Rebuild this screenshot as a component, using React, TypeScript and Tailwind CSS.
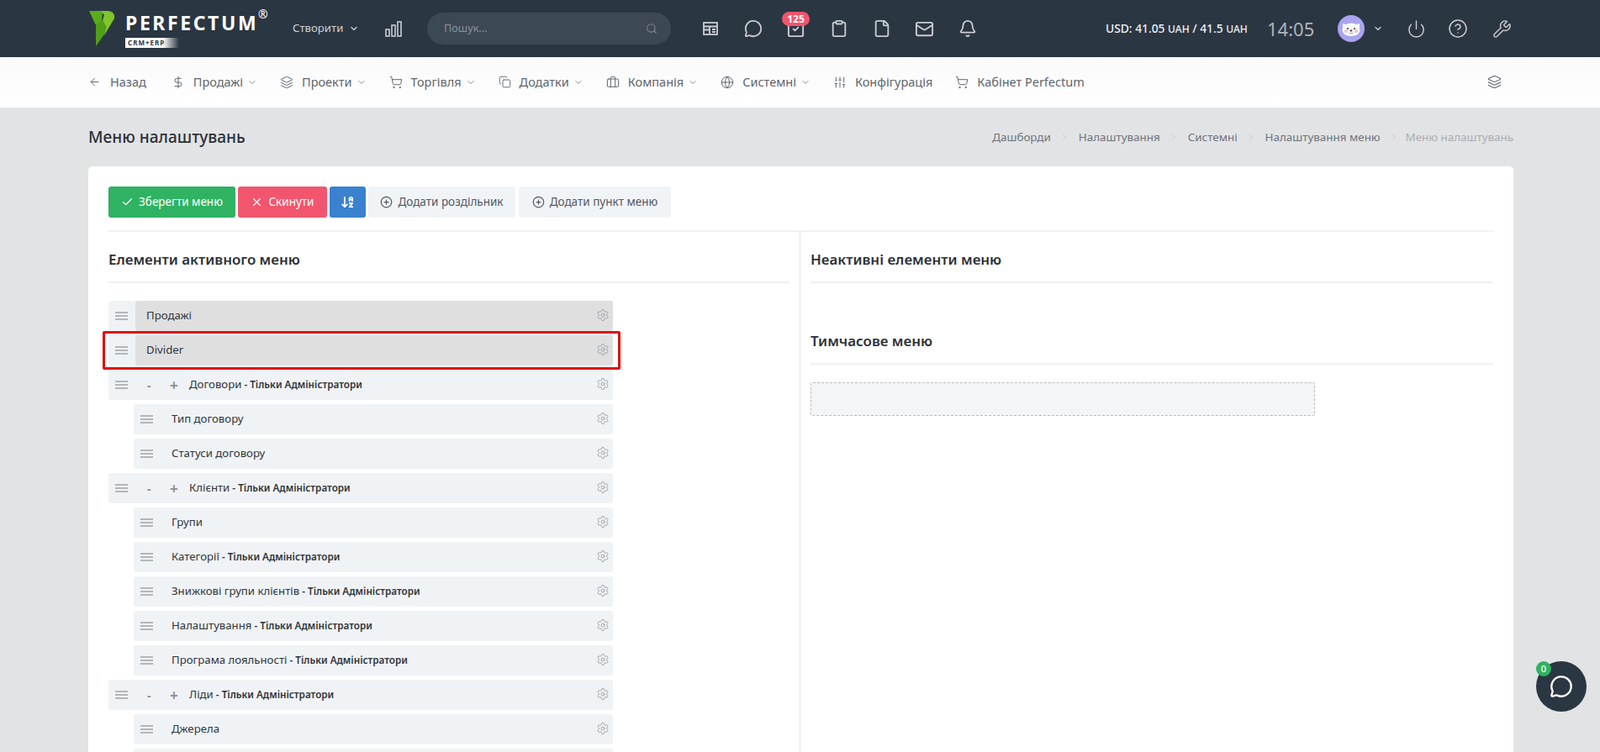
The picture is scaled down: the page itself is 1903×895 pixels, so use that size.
import {
  ArrowDownAZ,
  ArrowLeft,
  Bell,
  Briefcase,
  Check,
  ChevronDown,
  ChevronRight,
  CircleHelp,
  CirclePlus,
  Clipboard,
  Copy,
  DollarSign,
  File,
  Globe,
  Layers,
  Mail,
  MessageCircle,
  Power,
  Search,
  Settings,
  ShoppingCart,
  SlidersVertical,
  SquareCheck,
  Wrench,
  X,
} from "lucide-react";
import type { ReactNode } from "react";

function Logo() {
  return (
    <div className="flex h-[68px] w-[216px] shrink-0 items-center">
      <svg viewBox="0 0 32 44" className="h-[44px] w-[32px] shrink-0">
        <path d="M1 1h16l-1 14-6 2-1.500 0z" fill="#58ad1b" />
        <path d="M9 17l9-5 3 6-2 11-10 14z" fill="#4f9f18" />
        <path d="M15 1h8c6 0 9 4 8 9l-12 20 2-11-4-7 2-6z" fill="#7fc52b" />
      </svg>
      <div className="relative ml-[12px] h-[44px] flex-1">
        <div className="text-[23px] leading-[30px] font-bold tracking-[2.6px] text-white [font-family:'Open_Sans',sans-serif]">
          PERFECTUM
        </div>
        <div className="mt-[3px] flex h-[12px] w-[64px] items-center bg-gradient-to-r from-white from-70% to-transparent pl-[3px] text-[8px] leading-none font-bold tracking-[1px] text-[#2b3643]">
          CRM+ERP
        </div>
        <span className="absolute top-[-6px] left-[158px] text-[14px] text-white">®</span>
      </div>
    </div>
  );
}

function TableIcon() {
  return (
    <svg viewBox="0 0 18 16" width="18" height="16" fill="none" stroke="#c9cdd2" strokeWidth="1.800">
      <rect x="1" y="1" width="16" height="14" />
      <path d="M1 5.500h16M1 9.500h7M8 5.500V15M11 9h4M11 12h4" />
    </svg>
  );
}

function BarsIcon() {
  return (
    <svg viewBox="0 0 20 19" width="20" height="19" fill="none" stroke="#c9cdd2" strokeWidth="1.600">
      <rect x="1" y="10" width="4" height="8" />
      <rect x="8" y="5" width="4" height="13" />
      <rect x="15" y="1" width="4" height="17" />
    </svg>
  );
}

function Avatar() {
  return (
    <svg viewBox="0 0 32 32" className="ml-[28px] h-[32px] w-[32px]">
      <circle cx="16" cy="16" r="16" fill="#a9a4f0" />
      <path d="M6 10l4 1c4-2 8-2 12 0l4-1 0 5c2 6-3 10-10 10S4 21 6 15z" fill="#fbfaf7" />
      <circle cx="10" cy="19" r="2.200" fill="#f6c6cc" />
      <circle cx="22" cy="19" r="2.200" fill="#f6c6cc" />
      <circle cx="12" cy="16" r="1" fill="#333" />
      <circle cx="20" cy="16" r="1" fill="#333" />
      <ellipse cx="16" cy="18.500" rx="1.500" ry="1" fill="#333" />
      <path d="M13.500 21c1 1 2 1 2.500 0 .5 1 1.500 1 2.500 0" fill="none" stroke="#555" strokeWidth="0.600" />
    </svg>
  );
}

function TopIcon({ children, badge }: { children: ReactNode; badge?: string }) {
  return (
    <div className="relative flex h-[68px] w-[51px] items-center justify-center">
      {children}
      {badge && (
        <span className="absolute top-[14px] left-[9px] flex h-[17px] w-[33px] items-center justify-center rounded-full bg-[#f2546c] text-[12px] font-bold text-white">
          {badge}
        </span>
      )}
    </div>
  );
}

function Header() {
  const ic = "#c9cdd2";
  return (
    <header className="flex h-[68px] items-center bg-[#2b3643] pl-[105px]">
      <Logo />
      <div className="ml-[27px] flex w-[100px] items-center gap-[7px] text-[13.200px] text-[#ced2d6]">
        Створити <ChevronDown size={12} strokeWidth={2.500} />
      </div>
      <div className="ml-[10px]">
        <BarsIcon />
      </div>
      <div className="ml-[30px] flex h-[38px] w-[290px] items-center justify-between rounded-full bg-[#3d4855] pr-[16px] pl-[20px] text-[12.700px] text-[#8a929b]">
        Пошук...
        <Search size={14} color="#7d858e" />
      </div>
      <div className="ml-[21px] flex">
        <TopIcon><TableIcon /></TopIcon>
        <TopIcon><MessageCircle size={22} color={ic} strokeWidth={2} /></TopIcon>
        <TopIcon badge="125"><SquareCheck size={23} color={ic} strokeWidth={2} /></TopIcon>
        <TopIcon><Clipboard size={22} color={ic} strokeWidth={2} /></TopIcon>
        <TopIcon><File size={22} color={ic} strokeWidth={2} /></TopIcon>
        <TopIcon><Mail size={23} color={ic} strokeWidth={2} /></TopIcon>
        <TopIcon><Bell size={22} color={ic} strokeWidth={2} /></TopIcon>
      </div>
      <div className="ml-[139px] w-[168px] text-[13.800px] font-medium whitespace-nowrap text-[#eef0f2]">
        USD: 41.05 <span className="text-[12px]">UAH</span> / 41.5 <span className="text-[12px]">UAH</span>
      </div>
      <div className="ml-[24px] w-[56px] text-[22px] text-[#aeb4ba]">14:05</div>
      <Avatar />
      <ChevronDown size={12} color={ic} strokeWidth={2.500} className="ml-[10px]" />
      <Power size={23} color={ic} strokeWidth={1.500} className="ml-[28px]" />
      <CircleHelp size={24} color={ic} strokeWidth={1.500} className="ml-[26px]" />
      <Wrench size={23} color={ic} strokeWidth={1.500} className="ml-[29px]" />
    </header>
  );
}

const nav: { icon: ReactNode; label: string; chev: boolean }[] = [
  { icon: <DollarSign size={16} strokeWidth={1.500} />, label: "Продажі", chev: true },
  { icon: <Layers size={16} strokeWidth={1.500} />, label: "Проекти", chev: true },
  { icon: <ShoppingCart size={16} strokeWidth={1.500} />, label: "Торгівля", chev: true },
  { icon: <Copy size={15} strokeWidth={1.500} />, label: "Додатки", chev: true },
  { icon: <Briefcase size={16} strokeWidth={1.500} />, label: "Компанія", chev: true },
  { icon: <Globe size={16} strokeWidth={1.500} />, label: "Системні", chev: true },
  { icon: <SlidersVertical size={16} strokeWidth={1.500} />, label: "Конфігурація", chev: false },
  { icon: <ShoppingCart size={16} strokeWidth={1.500} />, label: "Кабінет Perfectum", chev: false },
];

function Nav() {
  return (
    <nav className="flex h-[60px] items-center justify-between bg-gradient-to-b from-[#fafafa] to-white pr-[117px] pb-[1px] pl-[105px] text-[14.500px] text-[#5f666d]">
      <div className="flex items-center gap-[27px]">
        <div className="mr-[3px] flex items-center gap-[11px]">
          <ArrowLeft size={15} strokeWidth={1.500} />
          Назад
        </div>
        {nav.map((n) => (
          <div key={n.label} className="flex items-center">
            {n.icon}
            <span className="ml-[10px]">{n.label}</span>
            {n.chev && <ChevronDown size={12} strokeWidth={1.500} className="ml-[5px]" />}
          </div>
        ))}
      </div>
      <Layers size={17} strokeWidth={1.500} />
    </nav>
  );
}

const crumbs = ["Дашборди", "Налаштування", "Системні", "Налаштування меню"];

function TitleBar() {
  return (
    <div className="flex h-[70px] items-center justify-between">
      <h1 className="text-[19.100px] font-medium text-[#2d3136]">Меню налаштувань</h1>
      <div className="flex items-center text-[13.400px] text-[#6e757c]">
        {crumbs.map((c) => (
          <span key={c} className="flex items-center">
            {c}
            <ChevronRight size={12} color="#c6c9cc" className="mx-[10.500px]" />
          </span>
        ))}
        <span className="-ml-[3px] text-[#a9aeb3]">Меню налаштувань</span>
      </div>
    </div>
  );
}

function Btn({ className, children }: { className: string; children: ReactNode }) {
  return (
    <div className={`flex h-[37px] items-center justify-center gap-[6px] rounded-[3px] text-[13.500px] ${className}`}>
      {children}
    </div>
  );
}

function Toolbar() {
  return (
    <div className="flex gap-[3px] border-b-2 border-[#eff0f2] pb-[15px]">
      <Btn className="w-[151px] bg-[#2fb262] text-white"><Check size={15} />Зберегти меню</Btn>
      <Btn className="w-[106px] bg-[#f2566e] text-white"><X size={15} />Скинути</Btn>
      <Btn className="w-[43px] bg-[#3a81cf] text-white"><ArrowDownAZ size={17} strokeWidth={2.500} /></Btn>
      <Btn className="w-[175px] bg-[#f1f4f7] text-[#53595f]"><CirclePlus size={15} />Додати роздільник</Btn>
      <Btn className="ml-[1px] w-[181px] bg-[#f1f4f7] text-[#53595f]"><CirclePlus size={15} />Додати пункт меню</Btn>
    </div>
  );
}

function Handle() {
  return (
    <span className="flex w-[15px] flex-col gap-[2px]">
      <i className="h-[2px] bg-[#b4b7ba]" />
      <i className="h-[2px] bg-[#b4b7ba]" />
      <i className="h-[2px] bg-[#b4b7ba]" />
    </span>
  );
}

type Row = { label: string; admin?: boolean; kind: "grey" | "parent" | "child" };

const rows: Row[] = [
  { label: "Продажі", kind: "grey" },
  { label: "Divider", kind: "grey" },
  { label: "Договори", admin: true, kind: "parent" },
  { label: "Тип договору", kind: "child" },
  { label: "Статуси договору", kind: "child" },
  { label: "Клієнти", admin: true, kind: "parent" },
  { label: "Групи", kind: "child" },
  { label: "Категорії", admin: true, kind: "child" },
  { label: "Знижкові групи клієнтів", admin: true, kind: "child" },
  { label: "Налаштування", admin: true, kind: "child" },
  { label: "Програма лояльності", admin: true, kind: "child" },
  { label: "Ліди", admin: true, kind: "parent" },
  { label: "Джерела", kind: "child" },
  { label: "", kind: "child" },
];

function MenuRow({ row, marked }: { row: Row; marked: boolean }) {
  const text = (
    <span className="text-[13.200px] text-[#30353a]">
      {row.label}
      {row.admin && <b className="text-[11.700px] font-semibold"> - Тільки Адміністратори</b>}
    </span>
  );
  return (
    <div
      className={`relative flex h-[36px] items-center rounded-[3px] bg-[#f0f3f6] ${
        row.kind === "child" ? "ml-[30px]" : ""
      }`}
    >
      <div className="flex h-full w-[32px] shrink-0 items-center pl-[8px]">
        <Handle />
      </div>
      {row.kind === "grey" && (
        <div className="flex h-full flex-1 items-center rounded-[3px] bg-[#dfdfdf] pl-[13px]">{text}</div>
      )}
      {row.kind === "parent" && (
        <div className="flex items-center pl-[13px]">
          <span className="w-[28px] pl-[1px] text-[14px] font-bold text-[#8d9196]">-</span>
          <span className="w-[23px] text-[17px] leading-none font-bold text-[#8d9196]">+</span>
          {text}
        </div>
      )}
      {row.kind === "child" && <div className="flex items-center pl-[13px]">{text}</div>}
      <Settings size={16} color="#a0a4a8" strokeWidth={1.500} className="absolute top-[9px] right-[4px]" />
      {marked && (
        <div className="absolute top-[-5px] right-[-9px] bottom-[-5px] left-[-7px] rounded-[2px] border-[3px] border-[#e00b0b]" />
      )}
    </div>
  );
}

function Heading({ children }: { children: ReactNode }) {
  return (
    <h4 className="flex h-[61px] items-center border-b-2 border-[#eff0f2] pt-[6px] text-[16.900px] font-semibold text-[#2d3136]">
      {children}
    </h4>
  );
}

function Card() {
  return (
    <div className="rounded-t-[5px] bg-white px-[24px] pt-[24px]">
      <Toolbar />
      <div className="flex">
        <div className="w-[823px] shrink-0 border-r border-[#e4e5e7] pr-[12px]">
          <div className="w-[810px]">
            <Heading>Елементи активного меню</Heading>
            <div className="mt-[21px] flex w-[600px] flex-col gap-[5px]">
              {rows.map((r) => (
                <MenuRow key={r.label || "next"} row={r} marked={r.label === "Divider"} />
              ))}
            </div>
          </div>
        </div>
        <div className="flex-1 pl-[12px]">
          <Heading>Неактивні елементи меню</Heading>
          <div className="mt-[36px]">
            <Heading>Тимчасове меню</Heading>
          </div>
          <div className="mt-[21px] h-[40px] w-[600px] rounded-[3px] border border-dashed border-[#b9bbbe] bg-[#f4f5f7]" />
        </div>
      </div>
    </div>
  );
}

export default function App() {
  return (
    <div className="relative h-[895px] overflow-hidden bg-[#e2e3e5] font-['Roboto',sans-serif]">
      <Header />
      <Nav />
      <main className="mx-[105px] w-[1695px]">
        <TitleBar />
        <Card />
      </main>
      <div className="absolute top-[787px] left-[1827px] flex h-[60px] w-[60px] items-center justify-center rounded-full bg-[#2b3643]">
        <MessageCircle size={28} color="#fff" strokeWidth={2} />
        <span className="absolute top-[0px] left-[0px] flex h-[18px] w-[18px] items-center justify-center rounded-full bg-[#2eb363] text-[11px] font-medium text-white">
          0
        </span>
      </div>
    </div>
  );
}
